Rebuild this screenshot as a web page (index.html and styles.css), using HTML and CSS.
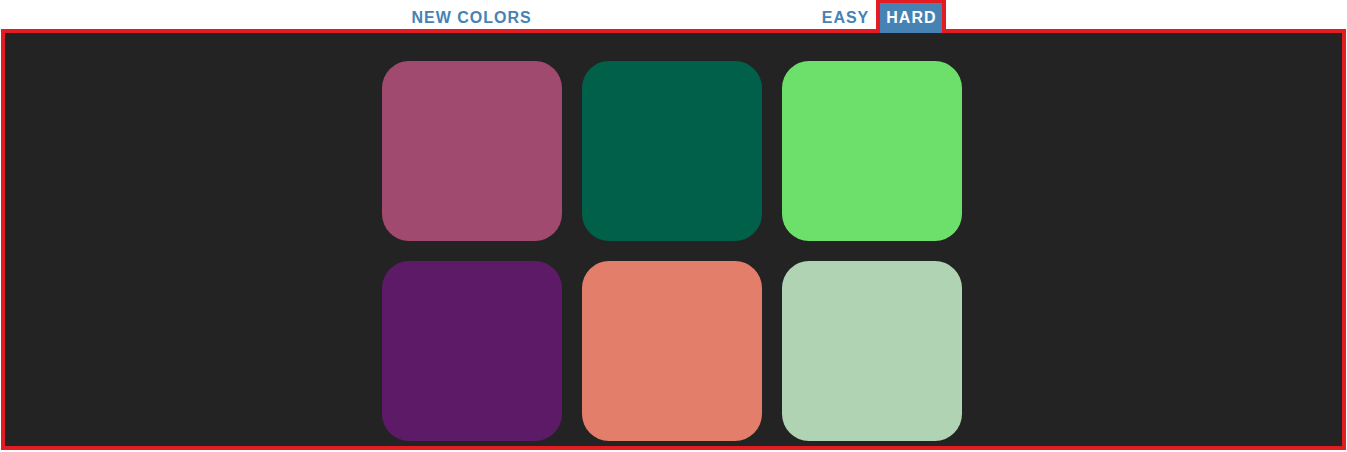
FILE: index.html
```html
<!DOCTYPE html>
<html lang="en">
<head>
<meta charset="utf-8">
<title>Color Game</title>
<link rel="stylesheet" href="styles.css">
</head>
<body>
<div class="stripe">
  <button class="btn reset">New Colors</button>
  <span class="message"></span>
  <button class="btn mode easy">Easy</button>
  <button class="btn mode selected">Hard</button>
</div>
<div class="board">
  <div class="grid">
    <div class="square sq1"></div>
    <div class="square sq2"></div>
    <div class="square sq3"></div>
    <div class="square sq4"></div>
    <div class="square sq5"></div>
    <div class="square sq6"></div>
  </div>
</div>
</body>
</html>
```

FILE: styles.css
```css
html, body {
  margin: 0;
  padding: 0;
  background: #ffffff;
  font-family: "Liberation Sans", Arial, sans-serif;
  font-size: 16px;
}

.stripe {
  position: relative;
  z-index: 1;
  height: 33px;
  display: flex;
  align-items: flex-end;
  justify-content: center;
  padding-left: 4px;
}

.btn {
  height: 30px;
  border: none;
  background: none;
  margin: 0;
  padding: 0 6px;
  font-family: inherit;
  font-size: 16px;
  font-weight: 700;
  letter-spacing: 1px;
  text-transform: uppercase;
  color: #4682b4;
  line-height: 30px;
  box-sizing: content-box;
  outline: none;
}

.message {
  display: inline-block;
  width: 278px;
}

.easy {
  padding-right: 7px;
}

.selected {
  color: #ffffff;
  background: #4682b4;
  height: 30px;
  border: 4px solid #e31b23;
  border-top-width: 3px;
  border-bottom: none;
  padding: 0 5px 0 6px;
}

.board {
  margin: -4px 1px 0 1px;
  border: 4px solid #e31b23;
  background: #232323;
}

.grid {
  display: grid;
  grid-template-columns: repeat(3, 180px);
  grid-auto-rows: 180px;
  gap: 20px;
  justify-content: center;
  padding: 28px 3px 5px 0;
}

.square {
  border-radius: 27px;
}

.sq1 { background: #a04a6f; }
.sq2 { background: #01604a; }
.sq3 { background: #6de06b; }
.sq4 { background: #5d1a66; }
.sq5 { background: #e27e6a; }
.sq6 { background: #b0d4b3; }
```
